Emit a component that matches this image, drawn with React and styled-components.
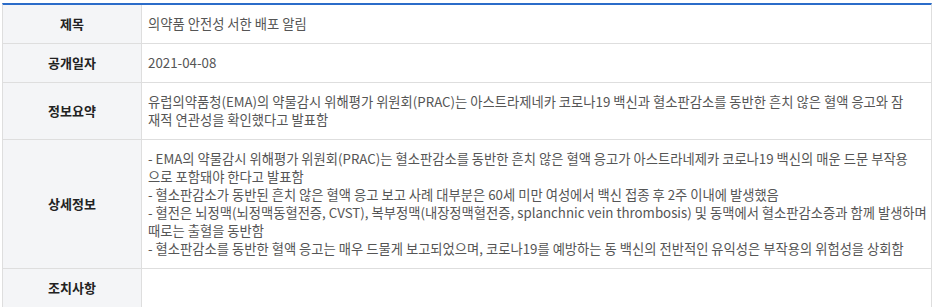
import React from "react";
import styled, { createGlobalStyle } from "styled-components";

const Global = createGlobalStyle`
  html, body { margin: 0; padding: 0; background: #fff; }
  body { font-family: "Noto Sans CJK KR", "Noto Sans", sans-serif; }
`;

const Wrap = styled.div`
  padding: 3px 3px 0 2px;
`;

const Table = styled.div`
  width: 930px;
  border-top: 2px solid #2b6cc9;
  border-left: 1px solid #dedede;
  border-right: 1px solid #dedede;
  box-sizing: border-box;
`;

const Row = styled.div`
  display: grid;
  grid-template-columns: ${(p) => p.$cols || "139px 1fr"};
  border-bottom: 1px solid #dedede;
`;

const Label = styled.div`
  background: #f4f5f7;
  border-right: 1px solid #dedede;
  display: flex;
  align-items: center;
  justify-content: center;
  font-size: 13px;
  font-weight: 700;
  color: #222;
  line-height: 18px;
  min-height: 18px;
  padding: 10px 0;
`;

const Value = styled.div`
  font-size: 13.3px;
  color: #555;
  line-height: 18px;
  padding: 10px 4px 10px 6px;
  min-height: 18px;
  min-width: 0;
`;

const Line = styled.span`
  display: block;
  white-space: nowrap;
`;

export default function App() {
  return (
    <>
      <Global />
      <Wrap>
        <Table>
          <Row>
            <Label>제목</Label>
            <Value>의약품 안전성 서한 배포 알림</Value>
          </Row>
          <Row>
            <Label>공개일자</Label>
            <Value>2021-04-08</Value>
          </Row>
          <Row>
            <Label>정보요약</Label>
            <Value>
              <Line>유럽의약품청(EMA)의 약물감시 위해평가 위원회(PRAC)는 아스트라제네카 코로나19 백신과 혈소판감소를 동반한 흔치 않은 혈액 응고와 잠</Line>
              <Line>재적 연관성을 확인했다고 발표함</Line>
            </Value>
          </Row>
          <Row>
            <Label>상세정보</Label>
            <Value>
              <Line>- EMA의 약물감시 위해평가 위원회(PRAC)는 혈소판감소를 동반한 흔치 않은 혈액 응고가 아스트라네제카 코로나19 백신의 매운 드문 부작용</Line>
              <Line>으로 포함돼야 한다고 발표함</Line>
              <Line>- 혈소판감소가 동반된 흔치 않은 혈액 응고 보고 사례 대부분은 60세 미만 여성에서 백신 접종 후 2주 이내에 발생했음</Line>
              <Line>- 혈전은 뇌정맥(뇌정맥동혈전증, CVST), 복부정맥(내장정맥혈전증, splanchnic vein thrombosis) 및 동맥에서 혈소판감소증과 함께 발생하며</Line>
              <Line>때로는 출혈을 동반함</Line>
              <Line>- 혈소판감소를 동반한 혈액 응고는 매우 드물게 보고되었으며, 코로나19를 예방하는 동 백신의 전반적인 유익성은 부작용의 위험성을 상회함</Line>
            </Value>
          </Row>
          <Row>
            <Label>조치사항</Label>
            <Value />
          </Row>
          <Row $cols="139px 370px 139px 1fr">
            <Label />
            <Value />
            <Label />
            <Value />
          </Row>
        </Table>
      </Wrap>
    </>
  );
}
